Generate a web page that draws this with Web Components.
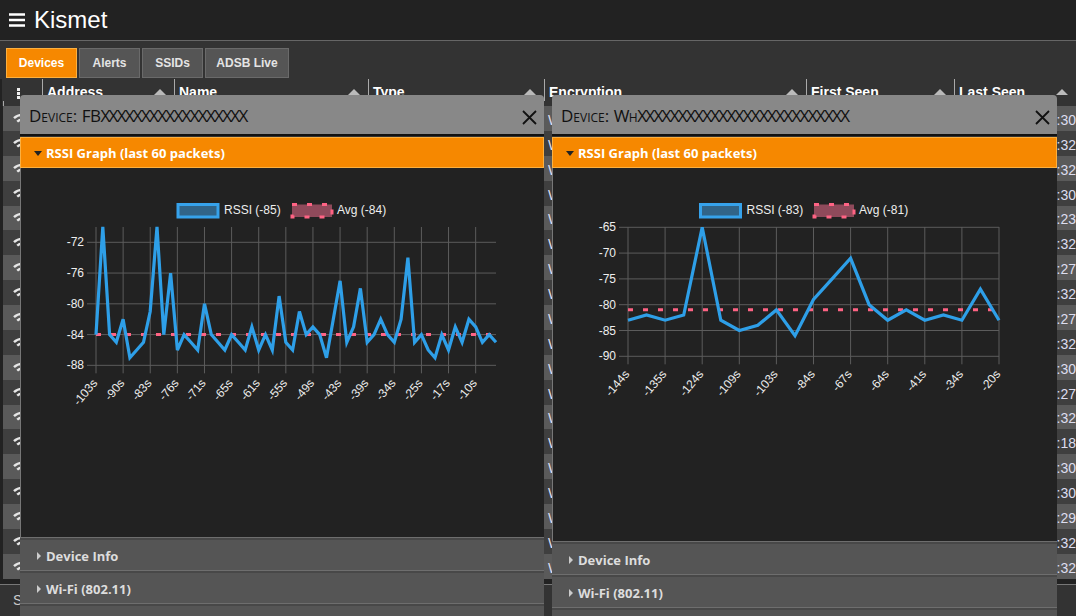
<!DOCTYPE html>
<html>
<head>
<meta charset="utf-8">
<title>Kismet</title>
<style>
    html, body { margin: 0; height: 616px; overflow: hidden; background: #333; }
    body { position: relative; font-family: "Liberation Sans", Arial, sans-serif; }
</style>
</head>
<body>
<kismet-topbar title-text="Kismet"></kismet-topbar>
<kismet-tabs></kismet-tabs>
<device-table></device-table>
<table-footer>S</table-footer>

<device-window style="left:20px;width:524px;--body-height:369px" prefix="FB" xs="18">
    <rssi-chart
        left="75" right="475" top="59" zero-y="74.3" per-db="7.69" max="-70" min="-88"
        ticks="-72,-76,-80,-84,-88" tick-every="4" legend-a="157" legend-b="271" avg="-84"
        labels="-103s,-90s,-83s,-76s,-71s,-65s,-61s,-55s,-49s,-43s,-39s,-34s,-25s,-17s,-10s"
        current="-85"
        data="-84,-70,-84,-85,-82,-87,-86,-85,-81,-70,-84,-76,-86,-84,-85,-86,-80,-84,-85,-86,-84,-85,-86,-83,-86,-84,-86,-79,-85,-86,-81,-84,-83,-84,-87,-82,-77,-85,-83,-78,-85,-84,-82,-84,-85,-82,-74,-85,-84,-86,-87,-84,-86,-83,-85,-82,-83,-85,-84,-85">
    </rssi-chart>
</device-window>

<device-window style="left:552px;width:505px;--body-height:373px" prefix="Wh" xs="26">
    <rssi-chart
        left="75" right="446" top="59" zero-y="59.3" per-db="5.16" max="-65" min="-90"
        ticks="-65,-70,-75,-80,-85,-90" tick-every="2" legend-a="147.5" legend-b="261" avg="-81"
        labels="-144s,-135s,-124s,-109s,-103s,-84s,-67s,-64s,-41s,-34s,-20s"
        current="-83"
        data="-83,-82,-83,-82,-65,-83,-85,-84,-81,-86,-79,-75,-71,-80,-83,-81,-83,-82,-83,-77,-83">
    </rssi-chart>
</device-window>

<script>
customElements.define('kismet-topbar', class KismetTopbar extends HTMLElement {
    constructor() {
        super();
        this.attachShadow({ mode: "open" });
    }

    connectedCallback() {
        this.shadowRoot.innerHTML = `
            <style>
                :host {
                    display: flex;
                    align-items: center;
                    gap: 9px;
                    box-sizing: border-box;
                    height: 41px;
                    padding: 0 0 0 9px;
                    background: #222;
                    border-bottom: 1px solid #666;
                    color: #fff;
                    font: 24px "Liberation Sans", Arial, sans-serif;
                }
                svg { display: block; }
            </style>
            <svg width="16" height="14" viewBox="0 0 16 14">
                <path d="M0 1.5H16M0 7H16M0 12.5H16" stroke="#fff" stroke-width="2.4"/>
            </svg>
            <span>${this.getAttribute('title-text')}</span>
        `;
    }
});

customElements.define('kismet-tabs', class KismetTabs extends HTMLElement {
    constructor() {
        super();
        this.attachShadow({ mode: "open" });
    }

    connectedCallback() {
        const tabs = [['Devices', 71, true], ['Alerts', 61], ['SSIDs', 61], ['ADSB Live', 84]];
        this.shadowRoot.innerHTML = `
            <style>
                :host {
                    display: flex;
                    gap: 2px;
                    height: 30px;
                    padding: 7px 0 1px 6px;
                    font: bold 12px "Liberation Sans", Arial, sans-serif;
                }
                div {
                    display: flex;
                    align-items: center;
                    justify-content: center;
                    box-sizing: border-box;
                    background: #555;
                    border: 1px solid #6a6a6a;
                    color: #e4e4e4;
                }
                .on { background: #f68800; border-color: #fbb040; color: #fff; }
            </style>
            ${tabs.map(t => `<div class="${t[2] ? 'on' : ''}" style="width:${t[1]}px">${t[0]}</div>`).join('')}
        `;
    }
});

customElements.define('device-table', class DeviceTable extends HTMLElement {
    constructor() {
        super();
        this.attachShadow({ mode: "open" });
    }

    connectedCallback() {
        const columns = ['Address', 'Name', 'Type', 'Encryption', 'First Seen', 'Last Seen'];
        const seen = ['30', '32', '32', '30', '23', '32', '27', '32', '27', '32', '30', '27', '32', '18', '30', '30', '29', '32', '32'];
        const wifi = `<svg width="18" height="14" viewBox="0 0 18 14" fill="none" stroke="#e6e6e6" stroke-width="2.4">
            <path d="M1 5.2C5.5 .8 12.5 .8 17 5.2M4.2 8.6C7 6 11 6 13.8 8.6"/><circle cx="9" cy="12" r="1.4" fill="#e6e6e6" stroke="none"/>
        </svg>`;
        this.shadowRoot.innerHTML = `
            <style>
                :host {
                    display: block;
                    box-sizing: border-box;
                    height: 505px;
                    padding-left: 3px;
                    background: #222;
                    box-shadow: inset 2px 0 #222;
                    color: #fff;
                    font: 14px "Liberation Sans", Arial, sans-serif;
                }
                .cols {
                    display: grid;
                    grid-template-columns: 39px 132px 194px 176px 262px 148px 1fr;
                }
                .head { height: 27px; background: #333; margin-left: -1px; padding-left: 1px; }
                .head > div {
                    position: relative;
                    box-sizing: border-box;
                    padding: 5px 0 0 4px;
                    border-left: 1px solid #aaa;
                    font-weight: bold;
                    line-height: 16px;
                }
                .head > div:first-child { border-left: 0; padding: 9px 0 0 14px; line-height: 0; }
                .head > div:not(:first-child):not(:last-child)::after {
                    content: "";
                    position: absolute;
                    right: 8px;
                    top: 10px;
                    border: 6px solid transparent;
                    border-top: 0;
                    border-bottom: 6px solid #bbb;
                }
                .row { height: 24.88px; align-items: center; background: #5a5a5a; }
                .row:nth-child(even) { background: #3f3f3f; }
                .row > div { overflow: hidden; white-space: nowrap; color: #dde; padding-top: 3px; }
                .row > .icon { padding-left: 10px; line-height: 0; }
                .row > .enc { padding-left: 4px; grid-column: 5; }
                .row > .last { grid-column: 7; text-align: right; }
            </style>
            <div class="cols head">
                <div><svg width="4" height="12" viewBox="0 0 4 12" fill="#eee"><rect width="3" height="3" y="0"/><rect width="3" height="3" y="4"/><rect width="3" height="3" y="8"/></svg></div>
                ${columns.map(c => `<div>${c}</div>`).join('')}
                <div></div>
            </div>
            ${seen.map(s => `
                <div class="cols row">
                    <div class="icon">${wifi}</div>
                    <div class="enc">W</div>
                    <div class="last">:${s}</div>
                </div>`).join('')}
        `;
    }
});

customElements.define('table-footer', class TableFooter extends HTMLElement {
    constructor() {
        super();
        this.attachShadow({ mode: "open" });
    }

    connectedCallback() {
        this.shadowRoot.innerHTML = `
            <style>
                :host {
                    display: block;
                    height: 32px;
                    box-sizing: border-box;
                    padding: 7px 0 0 13px;
                    border-top: 1px solid #777;
                    color: #ccc;
                    font: 14px "Liberation Sans", Arial, sans-serif;
                }
            </style>
            <slot></slot>
        `;
    }
});

customElements.define('device-window', class DeviceWindow extends HTMLElement {
    constructor() {
        super();
        this.attachShadow({ mode: "open" });
    }

    connectedCallback() {
        const prefix = this.getAttribute('prefix');
        const xs = 'X'.repeat(parseInt(this.getAttribute('xs')));
        const heads = ['Device Info', 'Wi-Fi (802.11)', ''];
        this.shadowRoot.innerHTML = `
            <style>
                :host {
                    display: block;
                    position: absolute;
                    top: 95px;
                    z-index: 2;
                    background: #333;
                    border-radius: 4px 4px 0 0;
                    font-family: "Open Sans", sans-serif;
                }
                .title {
                    display: flex;
                    align-items: center;
                    justify-content: space-between;
                    box-sizing: border-box;
                    height: 39px;
                    padding: 1px 7px 0 9px;
                    background: #888;
                    border-radius: 4px 4px 0 0;
                    color: #111;
                    font-size: 17px;
                    font-variant: small-caps;
                }
                .name { white-space: nowrap; }
                .prefix { letter-spacing: -0.5px; }
                .xs { letter-spacing: -1.7px; }
                .title svg { margin-top: 4px; }
                .rule { height: 2px; background: #111; }
                .rssi {
                    display: flex;
                    align-items: center;
                    gap: 4px;
                    box-sizing: border-box;
                    height: 31px;
                    margin-top: 1px;
                    padding: 1px 0 0 13px;
                    background: #f68800;
                    border: 1px solid #fbb040;
                    color: #fff;
                    font-weight: bold;
                    font-size: 13px;
                }
                .down { border: 4px solid transparent; border-top: 5px solid #222; border-bottom: 0; }
                .body {
                    height: var(--body-height);
                    background: #222;
                    border-left: 1px solid #777;
                }
                .head {
                    display: flex;
                    align-items: center;
                    gap: 5px;
                    box-sizing: border-box;
                    height: 33px;
                    padding: 4px 0 0 17px;
                    background: #555;
                    border-top: 1px solid #6e6e6e;
                    box-shadow: inset 0 2px #484848;
                    color: #ddd;
                    font-weight: bold;
                    font-size: 13px;
                }
                .right { border: 4px solid transparent; border-left: 4px solid #ccc; border-right: 0; }
            </style>
            <div class="title">
                <span class="name">Device: <span class="prefix">${prefix}</span><span class="xs">${xs}</span></span>
                <svg width="15" height="15" viewBox="0 0 15 15"><path d="M1 1L14 14M14 1L1 14" stroke="#111" stroke-width="1.8"/></svg>
            </div>
            <div class="rule"></div>
            <div class="rssi"><span class="down"></span>RSSI Graph (last 60 packets)</div>
            <div class="body"><slot></slot></div>
            ${heads.map(h => `<div class="head">${h ? `<span class="right"></span>${h}` : ''}</div>`).join('')}
        `;
    }
});

customElements.define('rssi-chart', class RssiChart extends HTMLElement {
    constructor() {
        super();
        this.attachShadow({ mode: "open" });
    }

    num(name) {
        return parseFloat(this.getAttribute(name));
    }

    connectedCallback() {
        const data = this.getAttribute('data').split(',').map(Number);
        const labels = this.getAttribute('labels').split(',');
        const ticks = this.getAttribute('ticks').split(',').map(Number);
        const left = this.num('left'), right = this.num('right'), top = this.num('top');
        const zeroY = this.num('zero-y'), perDb = this.num('per-db');
        const min = this.num('min'), every = this.num('tick-every'), avg = this.num('avg');
        const a = this.num('legend-a'), b = this.num('legend-b');
        const first = ticks[0];
        const step = (right - left) / (data.length - 1);
        const y = v => zeroY + (first - v) * perDb;
        const x = i => left + i * step;
        const bottom = y(min) + 8;
        const points = data.map((v, i) => `${x(i).toFixed(1)},${y(v).toFixed(1)}`).join(' ');
        const clipId = 'plot';

        const vLines = labels.map((l, n) => {
            const px = x(n * every);
            return `<line x1="${px}" x2="${px}" y1="${top}" y2="${bottom}"/>`;
        }).join('');
        const hLines = ticks.map(t => `<line x1="${left - 9}" x2="${right}" y1="${y(t)}" y2="${y(t)}"/>`).join('');
        const yText = ticks.map(t => `<text x="${left - 12}" y="${y(t) + 4}" text-anchor="end">${t}</text>`).join('');
        const xText = labels.map((l, n) => {
            const px = x(n * every) + 2;
            return `<text x="0" y="0" text-anchor="end" transform="translate(${px} ${bottom + 10}) rotate(-50)">${l}</text>`;
        }).join('');

        this.shadowRoot.innerHTML = `
            <style>
                :host { display: block; height: 100%; }
                svg { display: block; width: 100%; height: 100%; font: 12px "Liberation Sans", Arial, sans-serif; }
                text { fill: #eee; }
                .grid line { stroke: #5c5c5c; stroke-width: 1; }
            </style>
            <svg>
                <clipPath id="${clipId}"><rect x="0" y="${top - 1}" width="100%" height="100%"/></clipPath>
                <rect x="${a}" y="36.5" width="40" height="12.5" fill="#316488" stroke="#36a2eb" stroke-width="3"/>
                <text x="${a + 46}" y="46">RSSI (${this.getAttribute('current')})</text>
                <rect x="${b}" y="36.5" width="40" height="12.5" fill="#8f4a5b" stroke="#ff6384" stroke-width="3" stroke-dasharray="5 10"/>
                <text x="${b + 45}" y="46">Avg (${avg})</text>
                <g class="grid">${vLines}${hLines}</g>
                ${yText}${xText}
                <line x1="${left}" x2="${right}" y1="${y(avg)}" y2="${y(avg)}" stroke="#ff6384" stroke-width="3" stroke-dasharray="5 10"/>
                <polyline points="${points}" fill="none" stroke="#2e9fe8" stroke-width="3.2" clip-path="url(#${clipId})"/>
            </svg>
        `;
    }
});
</script>
</body>
</html>
